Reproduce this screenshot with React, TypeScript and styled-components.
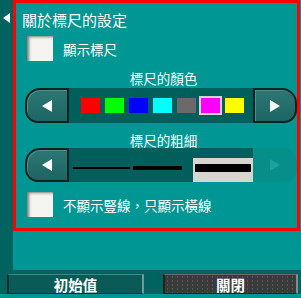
import React from 'react'
import styled, { createGlobalStyle } from 'styled-components'

const GlobalStyle = createGlobalStyle`
	html, body {
		margin: 0;
		padding: 0;
		background: #009694;
		overflow: hidden;
	}
	body {
		font-family: "Noto Sans CJK TC", "Noto Sans", sans-serif;
		color: #ffffff;
	}
`

const Page = styled.div`
	display: flex;
	flex-direction: column;
	width: 301px;
	height: 298px;
`
const Top = styled.div`
	display: flex;
	height: 270px;
`
const SideStrip = styled.div`
	width: 13px;
	background: #00635f;
	display: flex;
	justify-content: center;
	padding-top: 13px;
	box-sizing: border-box;
`
const SideArrow = styled.div`
	width: 0;
	height: 0;
	border-top: 5px solid transparent;
	border-bottom: 5px solid transparent;
	border-right: 7px solid #ffffff;
`
const Main = styled.div`
	flex: 1;
	padding-right: 1px;
`
const Panel = styled.div`
	height: 231px;
	box-sizing: border-box;
	border: 3px solid #ff0000;
	display: flex;
	flex-direction: column;
`
const Title = styled.div`
	font-size: 15px;
	line-height: 17px;
	padding: 8px 0 0 6px;
	height: 26px;
	box-sizing: border-box;
	white-space: nowrap;
`
const CheckRow = styled.div<{ $top: number }>`
	display: flex;
	align-items: center;
	gap: 10px;
	margin: ${p => p.$top}px 0 0 11px;
	height: 25px;
`
const CheckBox = styled.div`
	width: 26px;
	height: 25px;
	background: #f4f4f0;
	box-shadow: inset 3px 2px 3px -1px #7a7a7a;
`
const CheckText = styled.span`
	font-size: 13.5px;
	line-height: 16px;
	white-space: nowrap;
`
const Label = styled.div`
	font-size: 13.5px;
	line-height: 16px;
	margin-top: 9px;
	height: 16px;
	text-align: center;
	padding-left: 14px;
	white-space: nowrap;
`
const Row = styled.div<{ $h: number; $top: number }>`
	display: flex;
	height: ${p => p.$h}px;
	margin: ${p => p.$top}px 0 0 9px;
`
const ArrowButton = styled.div<{ $side: 'left' | 'right'; $disabled?: boolean }>`
	width: 44px;
	box-sizing: border-box;
	display: flex;
	align-items: center;
	justify-content: center;
	background: ${p => (p.$disabled ? '#058e8a' : 'linear-gradient(#2c7774, #1d6562)')};
	border: ${p => (p.$disabled ? 'none' : '2px solid #0b2322')};
	border-${p => (p.$side === 'left' ? 'right' : 'left')}-width: ${p => (p.$disabled ? '0' : '2px')};
	border-radius: ${p => (p.$side === 'left' ? '15px 0 0 13px' : '0 15px 13px 0')};
	box-shadow: ${p => (p.$disabled ? 'none' : 'inset 1px 1px 0 #4a8f8c')};
`
const Triangle = styled.div<{ $dir: 'left' | 'right'; $faded?: boolean }>`
	width: 0;
	height: 0;
	border-top: 6px solid transparent;
	border-bottom: 6px solid transparent;
	${p => (p.$dir === 'left' ? 'border-right' : 'border-left')}: 10px solid ${p => (p.$faded ? '#1fa09c' : '#ffffff')};
`
const Strip = styled.div<{ $pad: number }>`
	flex: 1;
	background: #005f5b;
	display: flex;
	padding-left: ${p => p.$pad}px;
`
const Swatches = styled.div`
	display: flex;
	align-items: center;
	gap: 5px;
`
const Swatch = styled.div<{ $color: string; $selected?: boolean }>`
	width: 19px;
	height: 15px;
	background: ${p => p.$color};
	outline: ${p => (p.$selected ? '2px solid #d6d6ce' : 'none')};
`
const Widths = styled.div`
	display: flex;
	align-items: flex-end;
	height: 100%;
`
const WidthOption = styled.div<{ $w: number; $gap: number; $selected?: boolean }>`
	width: ${p => p.$w}px;
	height: 24px;
	margin-left: ${p => p.$gap}px;
	box-sizing: border-box;
	display: flex;
	align-items: center;
	padding: 0 ${p => (p.$selected ? 2 : 0)}px 4px;
	background: ${p => (p.$selected ? '#d6d6ce' : 'transparent')};
`
const WidthLine = styled.div<{ $t: number }>`
	flex: 1;
	height: ${p => p.$t}px;
	background: #000000;
`
const Footer = styled.div`
	height: 24px;
	background: #00635f;
	display: flex;
	align-items: flex-end;
	padding-left: 7px;
	gap: 19px;
`
const FooterButton = styled.div<{ $w: number; $gray?: boolean }>`
	width: ${p => p.$w}px;
	height: 20px;
	box-sizing: border-box;
	display: flex;
	align-items: center;
	justify-content: center;
	font-size: 14.5px;
	font-weight: bold;
	color: #ffffff;
	background: ${p =>
		p.$gray
			? 'radial-gradient(#5a5a5a 0.6px, transparent 0.8px) 0 0 / 5px 4px, #3a3a3a'
			: '#0a5a57'};
	border-top: 1px solid ${p => (p.$gray ? '#6a6a6a' : '#3d8884')};
	border-left: 2px solid ${p => (p.$gray ? '#222' : '#0c2f2d')};
	border-right: 2px solid ${p => (p.$gray ? '#8a8a8a' : '#6a9e9b')};
	border-bottom: 1px solid #1a2a2a;
`

const colors = ['#ff0000', '#00ff00', '#0000ff', '#00ffff', '#6a6a6a', '#ff00ff', '#ffff00']

export default function App() {
	return (
		<Page>
			<GlobalStyle />
			<Top>
				<SideStrip>
					<SideArrow />
				</SideStrip>
				<Main>
					<Panel>
						<Title>關於標尺的設定</Title>
						<CheckRow $top={7}>
							<CheckBox />
							<CheckText>顯示標尺</CheckText>
						</CheckRow>
						<Label>標尺的顏色</Label>
						<Row $h={35} $top={2}>
							<ArrowButton $side="left">
								<Triangle $dir="left" />
							</ArrowButton>
							<Strip $pad={12}>
								<Swatches>
									{colors.map(c => (
										<Swatch key={c} $color={c} $selected={c === '#ff00ff'} />
									))}
								</Swatches>
							</Strip>
							<ArrowButton $side="right">
								<Triangle $dir="right" />
							</ArrowButton>
						</Row>
						<Label>標尺的粗細</Label>
						<Row $h={34} $top={0}>
							<ArrowButton $side="left">
								<Triangle $dir="left" />
							</ArrowButton>
							<Strip $pad={4}>
								<Widths>
									<WidthOption $w={57} $gap={0}>
										<WidthLine $t={2} />
									</WidthOption>
									<WidthOption $w={49} $gap={3}>
										<WidthLine $t={4} />
									</WidthOption>
									<WidthOption $w={60} $gap={11} $selected>
										<WidthLine $t={8} />
									</WidthOption>
								</Widths>
							</Strip>
							<ArrowButton $side="right" $disabled>
								<Triangle $dir="right" $faded />
							</ArrowButton>
						</Row>
						<CheckRow $top={10}>
							<CheckBox />
							<CheckText>不顯示豎線，只顯示橫線</CheckText>
						</CheckRow>
					</Panel>
				</Main>
			</Top>
			<Footer>
				<FooterButton $w={137}>初始值</FooterButton>
				<FooterButton $w={135} $gray>關閉</FooterButton>
			</Footer>
		</Page>
	)
}
